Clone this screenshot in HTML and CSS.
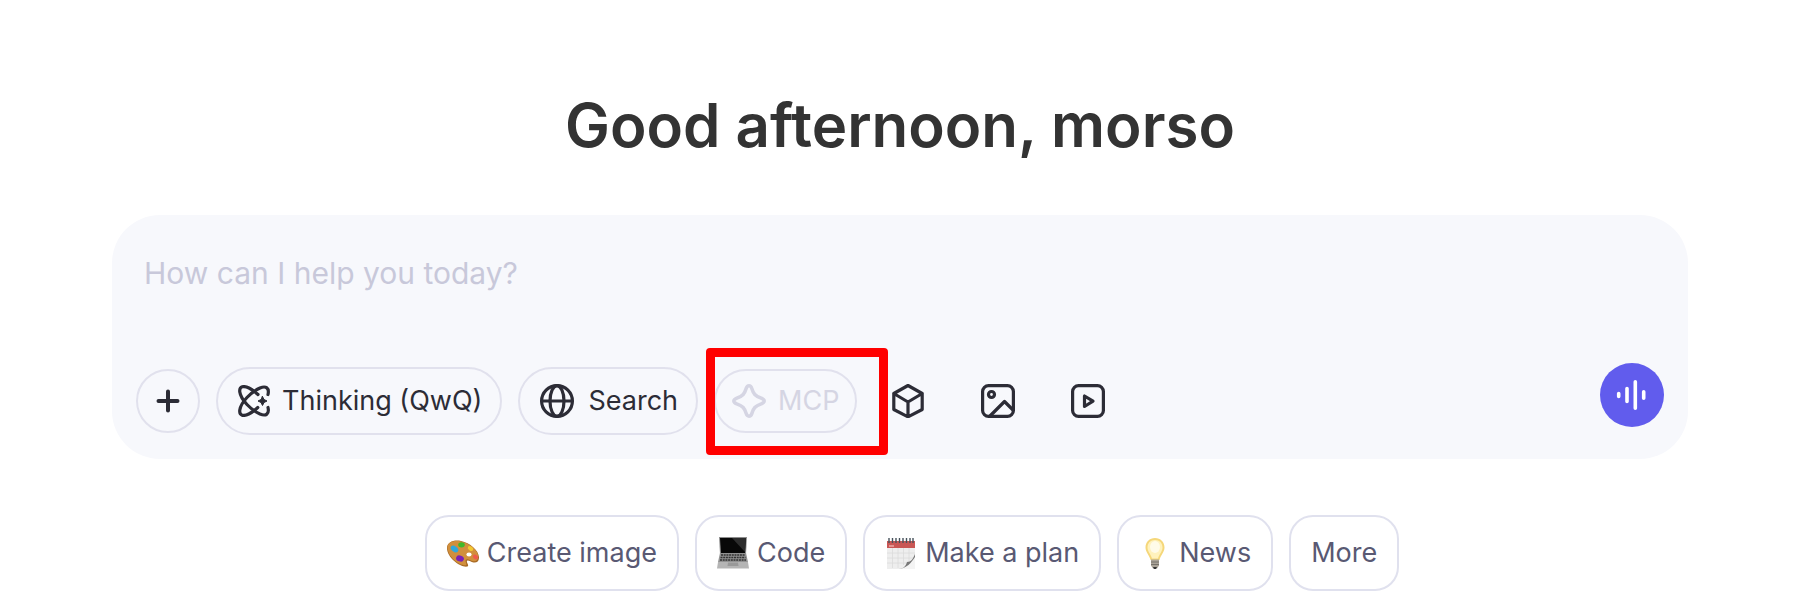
FILE: index.html
```html
<!DOCTYPE html>
<html lang="en">
<head>
    <meta charset="UTF-8">
    <meta name="viewport" content="width=device-width, initial-scale=1.0">
    <title>Chat</title>
    <link rel="stylesheet" href="styles.css">
</head>
<body>
    <main class="home">
        <h1>Good afternoon, morso</h1>

        <form class="composer">
            <textarea class="prompt" rows="1" placeholder="How can I help you today?" aria-label="Message"></textarea>
            <div class="toolbar">
                <div class="tools">
                    <button type="button" class="pill round" aria-label="Add">
                        <svg class="icon" viewBox="0 0 32 32"><path d="M16 6.500v19M6.500 16h19" stroke-width="4"/></svg>
                    </button>
                    <button type="button" class="pill">
                        <svg class="icon" viewBox="0 0 32 32">
                            <path d="M30 9.500C31.500 3 28 .500 22 3 13 7 3 17 1.800 25c-.8 6 4 6.500 9 4 3-1.500 6-3.800 9-6.500"/>
                            <path d="M30 22.500C31.500 29 28 31.500 22 29 13 25 3 15 1.800 7 1 1 6 .500 11 3c3 1.500 6 3.800 9 6.500"/>
                            <path class="solid" d="M24.500 11.500l1.500 3 3 1.500-3 1.500-1.500 3-1.500-3-3-1.500 3-1.500z"/>
                        </svg>
                        Thinking (QwQ)
                    </button>
                    <button type="button" class="pill search">
                        <svg class="icon large" viewBox="0 0 34 34"><circle cx="17" cy="17" r="15.400"/><ellipse cx="17" cy="17" rx="7" ry="15.400"/><path d="M2 17h30"/></svg>
                        Search
                    </button>
                    <div class="highlight">
                        <button type="button" class="pill mcp" disabled>
                            <svg class="icon large" viewBox="0 0 34 34"><path d="M17 1.800c1.500 0 2.300 1 2.800 2.600 1.700 5.400 3.200 7.500 9.400 9.700 2 .8 3 1.600 3 2.900s-1 2.100-3 2.900c-6.200 2.200-7.700 4.300-9.400 9.700-.5 1.600-1.300 2.600-2.800 2.600s-2.300-1-2.800-2.600c-1.700-5.400-3.200-7.500-9.400-9.700-2-.8-3-1.600-3-2.900s1-2.100 3-2.900c6.200-2.200 7.700-4.300 9.400-9.700.5-1.600 1.300-2.600 2.800-2.600z" stroke-width="3.500"/></svg>
                            MCP
                        </button>
                    </div>
                    <div class="modes">
                        <button type="button" class="mode" aria-label="Artifacts">
                            <svg class="icon large" viewBox="0 0 34 34"><path d="M17 1.500l14.200 8v16L17 32.800 2.800 25.500v-16zM2.800 9.500L17 18l14.200-8.500M17 18v14.800"/></svg>
                        </button>
                        <button type="button" class="mode" aria-label="Image">
                            <svg class="icon large" viewBox="0 0 34 34"><rect x="1.600" y="1.600" width="30.800" height="30.800" rx="6"/><circle cx="10.500" cy="10.500" r="3"/><path d="M9 32L23.500 17.500l8.500 8.500"/></svg>
                        </button>
                        <button type="button" class="mode" aria-label="Video">
                            <svg class="icon large" viewBox="0 0 34 34"><rect x="1.600" y="1.600" width="30.800" height="30.800" rx="6"/><path d="M13.500 12v10.500l8.500-5.300z"/></svg>
                        </button>
                    </div>
                </div>
                <button type="button" class="voice" aria-label="Voice">
                    <svg class="icon" viewBox="0 0 32 32"><path d="M2.700 14.500v3M11 9.500v13M19.300 2.700v26.600M27.700 12.700v6.600" stroke-width="3.600"/></svg>
                </button>
            </div>
        </form>

        <nav class="suggestions">
            <button type="button" class="chip">
                <svg class="emoji" viewBox="0 0 32 32">
                    <path d="M0 11C0 5 7 2.500 14 4c9 2 17.500 9 18 16 .2 4-2 6-5.500 5.500-3-.5-5.500-3-6.500-1.500-.8 1.500 2.500 4.500.5 5.500C14 31 0 21 0 11z" fill="#a86a25"/>
                    <path d="M.500 10C1 5 7 3 14 4.500c9 2 17 8.500 17.200 15 0 3.500-2 5.200-5 4.700s-6-3-7.500-1.200c-1 1.500 1.800 4.500.3 5.200C12.500 29 .500 20 .500 10z" fill="#d18f3c"/>
                    <ellipse cx="7.500" cy="12" rx="4.200" ry="2.800" transform="rotate(35 7.500 12)" fill="#2ea8dc"/>
                    <ellipse cx="14.500" cy="7.800" rx="3.300" ry="2.600" fill="#3fb82a"/>
                    <ellipse cx="23.500" cy="11.500" rx="3" ry="2" transform="rotate(35 23.500 11.500)" fill="#f2c832"/>
                    <ellipse cx="28.500" cy="20" rx="2.800" ry="2" transform="rotate(35 28.500 20)" fill="#ef5b4c"/>
                    <ellipse cx="13" cy="21.500" rx="4" ry="3" transform="rotate(20 13 21.500)" fill="#7b22b5"/>
                    <ellipse cx="22" cy="17.500" rx="2.600" ry="2" fill="#fff"/>
                </svg>
                Create image
            </button>
            <button type="button" class="chip">
                <svg class="emoji" viewBox="0 0 32 32">
                    <path d="M2 0h28l-1 17H3z" fill="#8d8d8d"/>
                    <path d="M3 1h26l-1 15H4z" fill="#080808"/>
                    <path d="M15 1h14l-1 14z" fill="#2d2d2d"/>
                    <path d="M3 16h26l2 9H1z" fill="#929292"/>
                    <path d="M4 18h24M3.500 20.500h25M3 23h26" stroke="#333" stroke-width="1.500" stroke-dasharray="2 .7"/>
                    <path d="M1 25h30l1 6.500H0z" fill="#b5b5b5"/>
                    <path d="M11 25.500h10l.5 3.500h-11z" fill="#999"/>
                </svg>
                Code
            </button>
            <button type="button" class="chip">
                <svg class="emoji" viewBox="0 0 32 32">
                    <path d="M2 4h28v20l-11 8H2z" fill="#eee"/>
                    <path d="M7.500 11v20M13 11v20M18.500 11v17M24 11v15M2 16h28M2 21h26M2 26h20" stroke="#dadada" stroke-width=".8"/>
                    <path d="M2 4h28v7H2z" fill="#c95755"/>
                    <path d="M4 9h5" stroke="#eba7a5" stroke-width="1.500"/>
                    <path d="M30 17v15H14c7-1 7-5 8-7 4 0 6-3 8-8z" fill="#f4f4f4"/>
                    <path d="M30 17c-2 5-4 8-8 8-1 3-2 6-8 7 8-1 12-6 16-12z" fill="#777"/>
                    <path d="M4 1v5M7.500 1v5M11 1v5M14.500 1v5M18 1v5M21.500 1v5M25 1v5M28 1v5" stroke="#46525b" stroke-width="1.400"/>
                </svg>
                Make a plan
            </button>
            <button type="button" class="chip">
                <svg class="emoji" viewBox="0 0 32 32">
                    <path d="M16 1c5.500 0 9.500 4 9.500 9.500 0 5-4 7.500-5 12.500h-9c-1-5-5-7.500-5-12.500C6.500 5 10.500 1 16 1z" fill="#f5d77a"/>
                    <path d="M16 3c4.500 0 7.500 3 7.500 7.500 0 4-3.500 7-4.500 11h-6c-1-4-4.500-7-4.500-11C8.500 6 11.500 3 16 3z" fill="#fff2bd"/>
                    <ellipse cx="16" cy="10" rx="5" ry="6" fill="#fffbe9"/>
                    <path d="M12 22.500h8v6l-2 3h-4l-2-3z" fill="#aaa398"/>
                    <path d="M12 25h8M12 27.500h8" stroke="#77736c"/>
                    <path d="M14 30h4l-1 2h-2z" fill="#333"/>
                </svg>
                News
            </button>
            <button type="button" class="chip">More</button>
        </nav>
    </main>
</body>
</html>
```
FILE: styles.css
```css
* {
    box-sizing: border-box;
}

body {
    margin: 0;
    background-color: #fff;
    font-family: Inter, "Liberation Sans", sans-serif;
    color: #2c2c36;
}

.home {
    padding: 88px 110px 0 112px;
}

h1 {
    margin: 0 0 53px;
    font-size: 60px;
    font-weight: 600;
    line-height: 74px;
    text-align: center;
    color: #333;
}

button {
    margin: 0;
    padding: 0;
    border: none;
    background: none;
    font-family: inherit;
    color: inherit;
    cursor: pointer;
}

.composer {
    padding: 38px 24px 24px;
    border-radius: 48px;
    background-color: #f7f8fc;
}

.prompt {
    display: block;
    width: 100%;
    height: 110px;
    padding: 0 8px;
    border: none;
    outline: none;
    resize: none;
    background: none;
    font-family: inherit;
    font-size: 30px;
    line-height: 40px;
    color: inherit;
}

.prompt::placeholder {
    color: #c8c8da;
    opacity: 1;
}

.toolbar {
    display: flex;
    justify-content: space-between;
    height: 72px;
}

.tools {
    display: flex;
    align-items: center;
    align-self: flex-end;
}

.pill {
    display: flex;
    align-items: center;
    gap: 12px;
    height: 68px;
    margin-right: 16px;
    padding: 0 18px 0 20px;
    border: 2px solid #e1e1ed;
    border-radius: 34px;
    font-size: 27px;
    line-height: 36px;
    white-space: nowrap;
}

.round {
    justify-content: center;
    width: 64px;
    height: 64px;
    padding: 0;
}

.search {
    gap: 14px;
}

.icon {
    flex: none;
    width: 32px;
    height: 32px;
    fill: none;
    stroke: currentColor;
    stroke-width: 3.2;
    stroke-linecap: round;
    stroke-linejoin: round;
}

.large {
    width: 34px;
    height: 34px;
}

.solid {
    fill: currentColor;
    stroke-width: 1;
}

.highlight {
    position: relative;
    margin-right: 18px;
}

.highlight::after {
    content: "";
    position: absolute;
    inset: -21px -15px -22px -8px;
    border: 9px solid #f00;
    border-radius: 4px;
    pointer-events: none;
}

.mcp {
    height: 64px;
    padding: 0 16px;
    color: #d5d5e3;
}

.modes {
    display: flex;
    gap: 56px;
}

.mode {
    display: flex;
}

.voice {
    display: flex;
    align-items: center;
    justify-content: center;
    width: 64px;
    height: 64px;
    border-radius: 50%;
    background-color: #615ced;
    color: #fff;
}

.suggestions {
    display: flex;
    justify-content: center;
    gap: 16px;
    margin-top: 56px;
    padding-left: 24px;
}

.chip {
    display: flex;
    align-items: center;
    gap: 8px;
    height: 76px;
    padding: 0 20px;
    border: 2px solid #e0e1ee;
    border-radius: 24px;
    font-size: 27px;
    line-height: 36px;
    white-space: nowrap;
    color: #595973;
}

.emoji {
    flex: none;
    width: 32px;
    height: 32px;
}
```
